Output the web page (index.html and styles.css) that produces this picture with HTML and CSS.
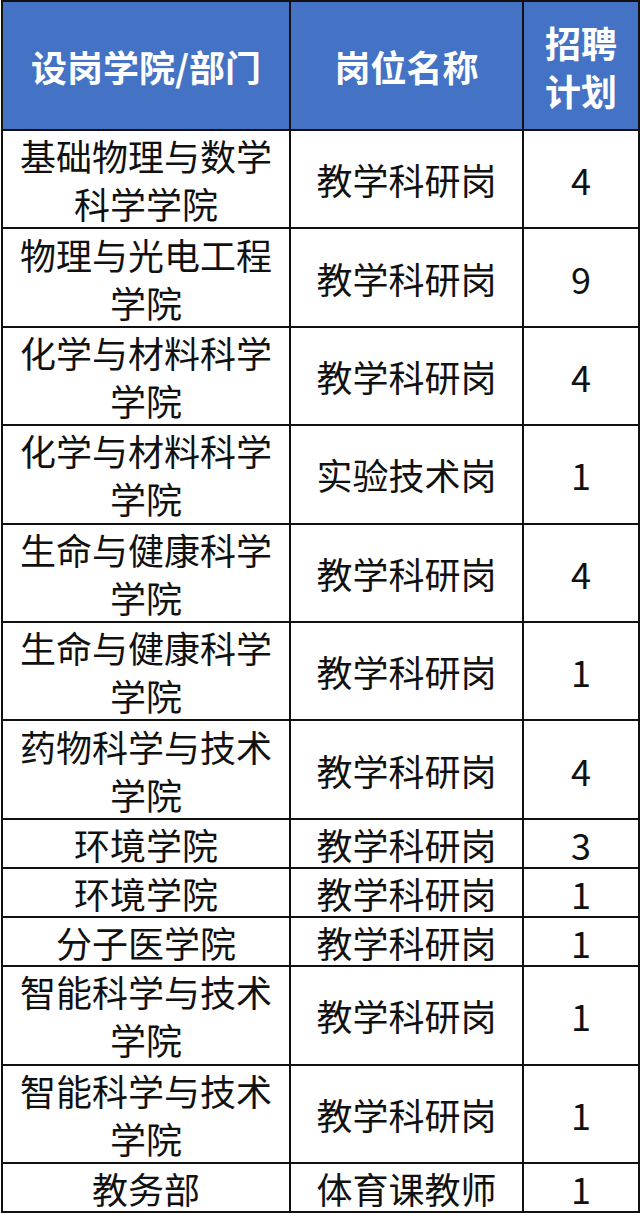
FILE: index.html
```html
<!DOCTYPE html>
<html lang="zh-CN">
<head>
<meta charset="utf-8">
<link rel="stylesheet" href="styles.css">
</head>
<body>
<table class="plan">
  <colgroup>
    <col class="c1"><col class="c2"><col class="c3">
  </colgroup>
  <thead>
    <tr class="head">
      <th>设岗学院/部门</th>
      <th>岗位名称</th>
      <th><span class="ln">招聘</span><span class="ln">计划</span></th>
    </tr>
  </thead>
  <tbody>
    <tr class="dbl"><td><span class="ln">基础物理与数学</span><span class="ln">科学学院</span></td><td>教学科研岗</td><td>4</td></tr>
    <tr class="dbl"><td><span class="ln">物理与光电工程</span><span class="ln">学院</span></td><td>教学科研岗</td><td>9</td></tr>
    <tr class="dbl"><td><span class="ln">化学与材料科学</span><span class="ln">学院</span></td><td>教学科研岗</td><td>4</td></tr>
    <tr class="dbl"><td><span class="ln">化学与材料科学</span><span class="ln">学院</span></td><td>实验技术岗</td><td>1</td></tr>
    <tr class="dbl"><td><span class="ln">生命与健康科学</span><span class="ln">学院</span></td><td>教学科研岗</td><td>4</td></tr>
    <tr class="dbl"><td><span class="ln">生命与健康科学</span><span class="ln">学院</span></td><td>教学科研岗</td><td>1</td></tr>
    <tr class="dbl"><td><span class="ln">药物科学与技术</span><span class="ln">学院</span></td><td>教学科研岗</td><td>4</td></tr>
    <tr class="sgl"><td>环境学院</td><td>教学科研岗</td><td>3</td></tr>
    <tr class="sgl"><td>环境学院</td><td>教学科研岗</td><td>1</td></tr>
    <tr class="sgl"><td>分子医学院</td><td>教学科研岗</td><td>1</td></tr>
    <tr class="dbl"><td><span class="ln">智能科学与技术</span><span class="ln">学院</span></td><td>教学科研岗</td><td>1</td></tr>
    <tr class="dbl"><td><span class="ln">智能科学与技术</span><span class="ln">学院</span></td><td>教学科研岗</td><td>1</td></tr>
    <tr class="sgl"><td>教务部</td><td>体育课教师</td><td>1</td></tr>
  </tbody>
</table>
</body>
</html>
```
FILE: styles.css
```css
html, body {
  margin: 0;
  padding: 0;
  background: #ffffff;
}

.plan {
  margin: 0 0 0 1px;
  width: 637px;
  table-layout: fixed;
  border-collapse: collapse;
  font-family: "Noto Sans CJK SC", "Noto Sans", sans-serif;
  color: #111111;
  font-size: 36px;
}

.c1 { width: 288px; }
.c2 { width: 233px; }
.c3 { width: 116px; }

.plan th,
.plan td {
  border: 2px solid #111111;
  padding: 0;
  text-align: center;
  vertical-align: middle;
  white-space: nowrap;
}

.ln {
  display: block;
}

.head {
  height: 129px;
}

.head th {
  background: #4472c4;
  color: #ffffff;
  font-weight: 700;
  line-height: 48px;
}

.dbl {
  height: 98.4px;
}

.dbl td {
  line-height: 48px;
}

.sgl {
  height: 49.2px;
}

.sgl td {
  line-height: 45px;
  padding-top: 2px;
}
```
